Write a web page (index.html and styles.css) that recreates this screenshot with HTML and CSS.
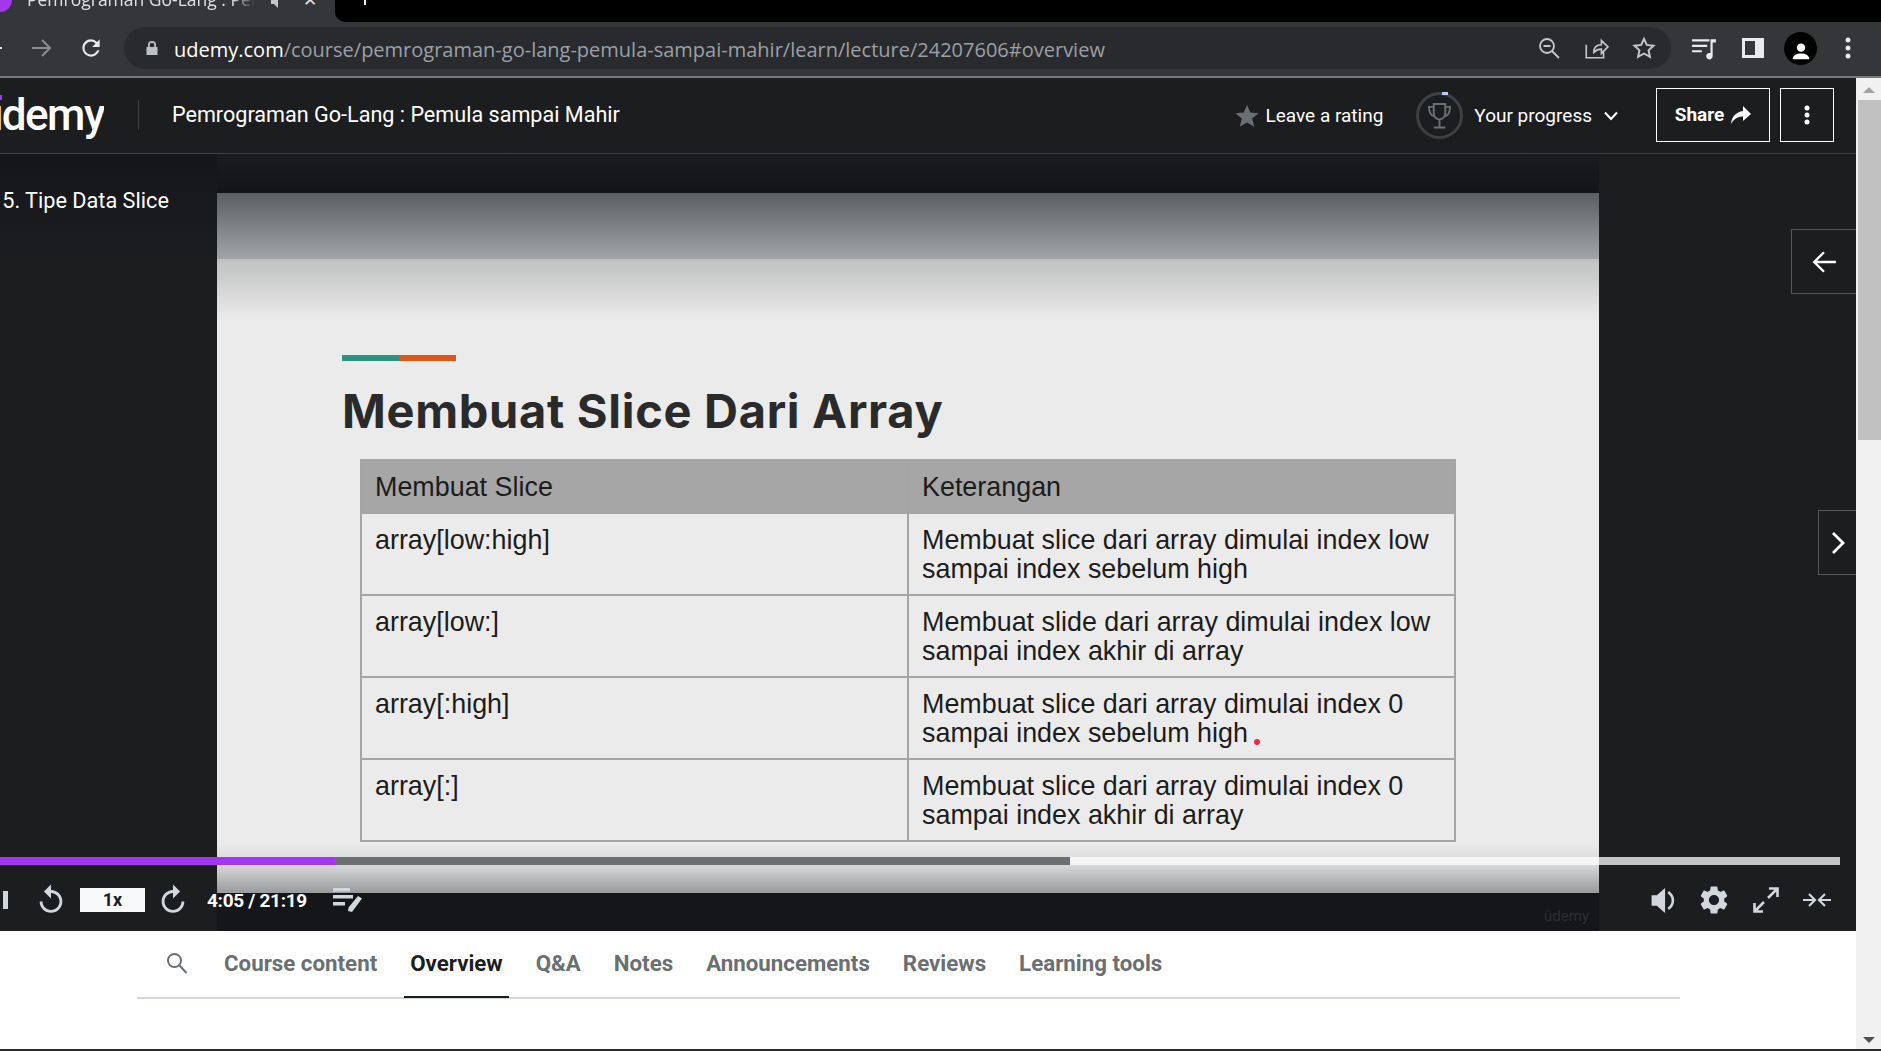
FILE: index.html
```html
<!DOCTYPE html>
<html lang="en">
<head>
    <meta charset="UTF-8">
    <meta name="viewport" content="width=device-width, initial-scale=1.0">
    <title>Pemrograman Go-Lang : Pemula sampai Mahir | Udemy</title>
    <link rel="stylesheet" href="styles.css">
</head>
<body>
    <div class="tabstrip">
        <div class="tab">
            <span class="favicon"></span>
            <span class="tab-title">Pemrograman Go-Lang : Pen</span>
            <svg class="tab-audio" width="14" height="14" viewBox="0 0 14 14"><path d="M1 5h3l4-4v12l-4-4H1z" fill="#c4c7c5"/></svg>
            <span class="tab-close">✕</span>
        </div>
        <div class="tab-rest"><span class="new-tab"></span></div>
    </div>

    <div class="toolbar">
        <svg class="nav-back" width="24" height="24" viewBox="0 0 24 24"><path d="M20 12H2" stroke="#e8eaed" stroke-width="2" fill="none"/></svg>
        <svg class="nav-forward" width="24" height="24" viewBox="0 0 24 24"><path d="M3 12h18M13 4l8 8-8 8" stroke="#8c8e91" stroke-width="2" fill="none"/></svg>
        <svg class="nav-reload" width="26" height="26" viewBox="0 0 24 24"><path d="M17.65 6.35A7.96 7.96 0 0 0 12 4a8 8 0 1 0 7.73 10h-2.08A6 6 0 1 1 12 6c1.66 0 3.14.69 4.22 1.78L13 11h7V4l-2.35 2.35z" fill="#e8eaed"/></svg>
        <div class="omnibox">
            <svg class="lock" width="14" height="16" viewBox="0 0 14 16"><path d="M3 7V5a4 4 0 0 1 8 0v2h1.500v8h-11V7zM4.800 7h4.400V5a2.200 2.200 0 0 0-4.400 0z" fill="#bdc1c6"/></svg>
            <span class="url"><span class="url-host">udemy.com</span>/course/pemrograman-go-lang-pemula-sampai-mahir/learn/lecture/24207606#overview</span>
            <div class="omni-icons">
                <svg width="24" height="24" viewBox="0 0 24 24" fill="none" stroke="#c4c7c5" stroke-width="1.800"><circle cx="10" cy="10" r="7"/><path d="M15 15l7 7M6.500 10h7"/></svg>
                <svg width="26" height="26" viewBox="0 0 24 24" fill="none" stroke="#c4c7c5" stroke-width="1.500"><path d="M3 9v12h16v-5M10 16c0-5 3-7 7-7V5l6 6-6 6v-4c-3 0-5 1-7 3z"/></svg>
                <svg width="26" height="26" viewBox="0 0 24 24" fill="none" stroke="#c4c7c5" stroke-width="1.800"><path d="M12 3.500l2.600 5.700 6.200.700-4.600 4.200 1.300 6.100L12 17.100l-5.500 3.100 1.300-6.100-4.600-4.200 6.200-.700z"/></svg>
            </div>
        </div>
        <div class="toolbar-icons">
            <svg width="26" height="26" viewBox="0 0 24 24" fill="#e8eaed"><path d="M1 4h16v2H1zM1 9h14v2H1zM1 14h9v2H1zM18 4h5v3h-3v12.500a3 3 0 1 1-2-2.800z"/></svg>
            <svg width="24" height="24" viewBox="0 0 24 24"><path d="M1 2h22v20H1zM4 5v14h10V5z" fill="#e8eaed" fill-rule="evenodd"/></svg>
            <span class="avatar">
                <svg width="24" height="24" viewBox="0 0 24 24" fill="#fff"><circle cx="12" cy="8" r="5"/><path d="M2 22c0-5 5-7 10-7s10 2 10 7z"/></svg>
            </span>
            <svg width="6" height="22" viewBox="0 0 6 22" fill="#e8eaed"><circle cx="3" cy="3" r="2.500"/><circle cx="3" cy="11" r="2.500"/><circle cx="3" cy="19" r="2.500"/></svg>
        </div>
    </div>

    <div class="page">
        <div class="content">
            <div class="header">
                <div class="logo">udemy</div>
                <div class="header-sep"></div>
                <div class="course-title">Pemrograman Go-Lang : Pemula sampai Mahir</div>
                <div class="header-right">
                    <div class="rating">
                        <svg width="26" height="26" viewBox="0 0 24 24" fill="#6a6f73"><path d="M12 1.500l3 7.300 7.700.600-5.900 5 1.900 7.600L12 18l-6.700 4 1.900-7.600-5.900-5 7.700-.6z"/></svg>
                        <span>Leave a rating</span>
                    </div>
                    <div class="progress-link">
                        <span class="trophy">
                            <svg width="23" height="27" viewBox="0 0 24 28" fill="none" stroke="#6a6f73" stroke-width="2"><path d="M6 2h12v10a6 6 0 0 1-12 0zM6 5H1c0 6 1.500 9 6 10M18 5h5c0 6-1.500 9-6 10M12 18v8M6 26.500h12"/></svg>
                        </span>
                        <span>Your progress</span>
                        <svg class="chevron" width="16" height="12" viewBox="0 0 16 12" fill="none" stroke="#fff" stroke-width="2"><path d="M2 2.500l6 6.500 6-6.500"/></svg>
                    </div>
                    <div class="btn btn-share">
                        <span>Share</span>
                        <svg width="20" height="18" viewBox="0 0 20 18"><path d="M12 0l8 8-8 7v-4.500C7 10.500 3 12.500 0 18c.5-7 5-12 12-13z" fill="#fff"/></svg>
                    </div>
                    <div class="btn btn-more">
                        <svg width="6" height="20" viewBox="0 0 6 20" fill="#fff"><circle cx="3" cy="3" r="2.500"/><circle cx="3" cy="10" r="2.500"/><circle cx="3" cy="17" r="2.500"/></svg>
                    </div>
                </div>
            </div>

            <div class="video">
                <div class="video-left">
                    <p class="lecture-name">15. Tipe Data Slice</p>
                </div>
                <div class="stage">
                    <div class="slide">
                        <div class="accent"><span class="accent-teal"></span><span class="accent-orange"></span></div>
                        <h1 class="slide-title">Membuat Slice Dari Array</h1>
                        <table class="slide-table">
                            <thead>
                                <tr><th>Membuat Slice</th><th>Keterangan</th></tr>
                            </thead>
                            <tbody>
                                <tr><td>array[low:high]</td><td>Membuat slice dari array dimulai index low<br>sampai index sebelum high</td></tr>
                                <tr><td>array[low:]</td><td>Membuat slide dari array dimulai index low<br>sampai index akhir di array</td></tr>
                                <tr><td>array[:high]</td><td>Membuat slice dari array dimulai index 0<br>sampai index sebelum high<span class="red-dot"></span></td></tr>
                                <tr><td>array[:]</td><td>Membuat slice dari array dimulai index 0<br>sampai index akhir di array</td></tr>
                            </tbody>
                        </table>
                    </div>
                    <div class="stage-bottom"><span class="watermark">ûdemy</span></div>
                </div>
                <div class="video-right"></div>

                <div class="nav-btn nav-prev">
                    <svg width="26" height="26" viewBox="0 0 24 24" fill="none" stroke="#fff" stroke-width="2.200"><path d="M23 12H3M12 3l-9 9 9 9"/></svg>
                </div>
                <div class="nav-btn nav-next">
                    <svg width="16" height="24" viewBox="0 0 16 24" fill="none" stroke="#fff" stroke-width="2.800"><path d="M3 2l10 10L3 22"/></svg>
                </div>

                <div class="seekbar">
                    <div class="seek-played"></div>
                    <div class="seek-buffered"></div>
                </div>

                <div class="controls">
                    <span class="pause-bar"></span>
                    <svg class="ctl-rewind" width="34" height="34" viewBox="0 0 24 24" fill="#d1d7dc"><path d="M12 5V1L7 6l5 5V7c3.310 0 6 2.690 6 6s-2.690 6-6 6-6-2.690-6-6H4c0 4.420 3.580 8 8 8s8-3.580 8-8-3.580-8-8-8z"/></svg>
                    <span class="speed">1x</span>
                    <svg class="ctl-forward" width="34" height="34" viewBox="0 0 24 24" fill="#d1d7dc"><path d="M12 5V1l5 5-5 5V7c-3.310 0-6 2.690-6 6s2.690 6 6 6 6-2.690 6-6h2c0 4.420-3.580 8-8 8s-8-3.580-8-8 3.580-8 8-8z"/></svg>
                    <span class="time">4:05 / 21:19</span>
                    <svg class="ctl-notes" width="30" height="24" viewBox="0 0 30 24" fill="#d1d7dc"><path d="M0 0h17v3.500H0zM0 7h20v3.500H0zM0 14h12v3.500H0zM25 8l4 2.500L19 24l-4-1 .5-3.500z"/></svg>
                    <div class="controls-right">
                        <svg width="24" height="27" viewBox="0 0 22 26" fill="#d1d7dc"><path d="M0 8h5l8-7v24l-8-7H0z"/><path d="M16 5c6 4 6 12 0 16" fill="none" stroke="#d1d7dc" stroke-width="2.500"/></svg>
                        <svg width="34" height="34" viewBox="0 0 24 24" fill="#d1d7dc"><path d="M19.140 12.940c.04-.3.06-.61.06-.94 0-.32-.02-.64-.07-.94l2.030-1.580c.18-.14.23-.41.12-.61l-1.920-3.320c-.12-.22-.37-.29-.59-.22l-2.390.96c-.5-.38-1.030-.7-1.620-.94l-.36-2.540c-.04-.24-.24-.41-.48-.41h-3.840c-.24 0-.43.17-.47.41l-.36 2.540c-.59.24-1.130.57-1.620.94l-2.390-.96c-.22-.08-.47 0-.59.22L2.740 8.870c-.12.21-.08.47.12.61l2.030 1.580c-.05.3-.09.63-.09.94s.02.64.07.94l-2.030 1.580c-.18.14-.23.41-.12.61l1.920 3.320c.12.22.37.29.59.22l2.390-.96c.5.38 1.030.7 1.620.94l.36 2.540c.05.24.24.41.48.41h3.840c.24 0 .44-.17.47-.41l.36-2.540c.59-.24 1.130-.56 1.620-.94l2.390.96c.22.08.47 0 .59-.22l1.920-3.320c.12-.22.07-.47-.12-.61l-2.010-1.580zM12 15.600c-1.980 0-3.600-1.620-3.600-3.600s1.620-3.600 3.600-3.600 3.600 1.620 3.600 3.600-1.620 3.600-3.600 3.600z"/></svg>
                        <svg width="26" height="26" viewBox="0 0 26 26" fill="none" stroke="#d1d7dc" stroke-width="2.600"><path d="M15 11l9-9M16 1.500h8.500V10M11 15l-9 9M1.500 16v8.500H10"/></svg>
                        <svg class="ctl-compress" width="28" height="16" viewBox="0 0 28 16" fill="none" stroke="#d1d7dc" stroke-width="2.200"><path d="M0 8h12M6 2l6 6-6 6M28 8H16M22 2l-6 6 6 6"/></svg>
                    </div>
                </div>
            </div>

            <div class="tabs-area">
                <div class="tabs">
                    <svg class="tabs-search" width="24" height="24" viewBox="0 0 24 24" fill="none" stroke="#6a6f73" stroke-width="2"><circle cx="9.500" cy="9.500" r="6.500"/><path d="M14.500 14.500l7 7.500"/></svg>
                    <div class="tab-link">Course content</div>
                    <div class="tab-link tab-active">Overview</div>
                    <div class="tab-link">Q&amp;A</div>
                    <div class="tab-link">Notes</div>
                    <div class="tab-link">Announcements</div>
                    <div class="tab-link">Reviews</div>
                    <div class="tab-link">Learning tools</div>
                </div>
            </div>
        </div>

        <div class="scrollbar">
            <span class="arrow-up"></span>
            <div class="thumb"></div>
            <span class="arrow-down"></span>
        </div>
    </div>
    <div class="taskbar-edge"></div>
</body>
</html>
```

FILE: styles.css
```css
* {
    box-sizing: border-box;
}
html, body {
    height: 100%;
}
body {
    margin: 0;
    width: 1881px;
    height: 1051px;
    overflow: hidden;
    display: flex;
    flex-direction: column;
    font-family: Roboto, 'Liberation Sans', sans-serif;
    background-color: #fff;
}

/* browser tab row, cut off by the top of the screen */
.tabstrip {
    display: flex;
    height: 22px;
    flex-shrink: 0;
    background-color: #35363a;
}
.tab {
    width: 335px;
    height: 22px;
    overflow: hidden;
    display: flex;
    align-items: center;
    color: #dee1e6;
    font-family: 'Open Sans', sans-serif;
    font-size: 17.500px;
    white-space: nowrap;
}
.favicon {
    width: 24px;
    height: 24px;
    margin-left: -12px;
    margin-top: -22px;
    border-radius: 50%;
    background-color: #a435f0;
    flex-shrink: 0;
}
.tab-title {
    width: 228px;
    margin-left: 15px;
    margin-top: -24px;
    overflow: hidden;
    -webkit-mask-image: linear-gradient(to right, #000 90%, transparent);
    mask-image: linear-gradient(to right, #000 90%, transparent);
}
.tab-audio {
    margin-left: 15px;
    margin-top: -18px;
}
.tab-close {
    margin-left: 19px;
    margin-top: -24px;
    font-size: 17px;
}
.tab-rest {
    flex: 1;
    background-color: #000;
    border-bottom-left-radius: 10px;
    padding-left: 29px;
}
.new-tab {
    display: block;
    width: 2px;
    height: 5px;
    background-color: #e8eaed;
}

/* browser toolbar */
.toolbar {
    display: flex;
    align-items: center;
    height: 56px;
    flex-shrink: 0;
    padding-bottom: 2px;
    background-color: #35363a;
    border-bottom: 2px solid #77787a;
}
.nav-back {
    margin-left: -18px;
    flex-shrink: 0;
}
.nav-forward {
    margin-left: 23px;
}
.nav-reload {
    margin-left: 25px;
}
.omnibox {
    display: flex;
    align-items: center;
    width: 1547px;
    height: 42px;
    margin-left: 20px;
    padding: 0 14px 0 21px;
    border-radius: 21px;
    background-color: #292a2d;
}
.lock {
    flex-shrink: 0;
}
.url {
    margin-left: 15px;
    padding-top: 2px;
    font-family: 'Open Sans', sans-serif;
    font-size: 20px;
    color: #9aa0a6;
    white-space: nowrap;
}
.url-host {
    color: #fff;
}
.omni-icons {
    margin-left: auto;
    display: flex;
    align-items: center;
    gap: 22px;
}
.toolbar-icons {
    display: flex;
    align-items: center;
    margin-left: 20px;
    gap: 24px;
}
.avatar {
    display: flex;
    align-items: flex-end;
    justify-content: center;
    width: 33px;
    height: 33px;
    margin: 0 4px 0 -5px;
    padding-bottom: 4px;
    border-radius: 50%;
    background-color: #000;
}
.avatar svg {
    width: 20px;
    height: 20px;
}

/* page below the browser */
.page {
    flex: 1;
    min-height: 0;
    display: flex;
}
.content {
    width: 1856px;
    display: flex;
    flex-direction: column;
}
.scrollbar {
    flex: 1;
    display: flex;
    flex-direction: column;
    align-items: flex-end;
    background-color: #f1f1f1;
}
.arrow-up {
    width: 0;
    height: 0;
    margin: 9px 6px 7px 0;
    border-left: 6px solid transparent;
    border-right: 6px solid transparent;
    border-bottom: 6px solid #a3a3a3;
}
.thumb {
    width: 23px;
    height: 340px;
    background-color: #c1c1c1;
}
.arrow-down {
    width: 0;
    height: 0;
    margin: auto 6px 6px 0;
    border-left: 6px solid transparent;
    border-right: 6px solid transparent;
    border-top: 6px solid #505050;
}
.taskbar-edge {
    height: 2px;
    flex-shrink: 0;
    background-color: #2b2b2b;
}

/* udemy header */
.header {
    display: flex;
    align-items: center;
    height: 76px;
    padding-bottom: 2px;
    flex-shrink: 0;
    color: #fff;
    background-color: #1c1d1f;
    border-bottom: 1px solid #3e4143;
}
.logo {
    position: relative;
    width: 104px;
    direction: rtl;
    overflow: hidden;
    font-size: 44px;
    font-weight: 500;
    letter-spacing: -1.500px;
    line-height: 60px;
    white-space: nowrap;
}
.logo::before {
    content: "";
    position: absolute;
    left: 0;
    top: 10px;
    width: 2px;
    height: 5px;
    background-color: #a435f0;
}
.header-sep {
    width: 1px;
    height: 30px;
    margin-left: 34px;
    background-color: #3e4143;
}
.course-title {
    margin-left: 33px;
    font-size: 21.600px;
    white-space: nowrap;
}
.header-right {
    margin-left: auto;
    display: flex;
    align-items: center;
    padding-right: 22px;
    font-size: 19px;
}
.rating {
    display: flex;
    align-items: center;
    gap: 6px;
    margin-top: 2px;
}
.progress-link {
    display: flex;
    align-items: center;
    margin-left: 33px;
    margin-top: 2px;
}
.trophy {
    position: relative;
    display: flex;
    align-items: center;
    justify-content: center;
    width: 47px;
    height: 47px;
    margin-right: 11px;
    border: 3px solid #3e4143;
    border-radius: 50%;
}
/* little progress mark at the top of the ring */
.trophy::before {
    content: "";
    position: absolute;
    top: -3px;
    left: 23px;
    width: 6px;
    height: 3px;
    background-color: #c0c4fc;
}
.chevron {
    margin-left: 11px;
}
.btn {
    display: flex;
    align-items: center;
    justify-content: center;
    height: 54px;
    border: 1px solid #fff;
}
.btn-share {
    width: 114px;
    margin-left: 37px;
    gap: 7px;
    font-weight: 700;
}
.btn-more {
    width: 54px;
    margin-left: 10px;
}

/* video player */
.video {
    position: relative;
    display: flex;
    height: 777px;
    flex-shrink: 0;
    overflow: hidden;
    background-color: #1c1d1f;
}
.video-left {
    width: 217px;
    flex-shrink: 0;
    background: linear-gradient(#15161a, #1c1d1f 110px);
}
.lecture-name {
    margin: 34px 0 0 -10px;
    color: #fff;
    font-size: 21.700px;
    white-space: nowrap;
}
.video-right {
    flex: 1;
}
.stage {
    width: 1382px;
    padding-top: 39px;
    display: flex;
    flex-direction: column;
    background: linear-gradient(#1b1c1f, #131418 39px);
}
.slide {
    height: 700px;
    padding: 162px 0 0 125px;
    color: #1c1c1c;
    background: linear-gradient(#5b5e62, #a2a5a7 66px, #bfc0c1 66px, #ebebeb 127px, #ebebeb 650px, #d8d8da 672px, #989a9c 700px);
}
.accent {
    display: flex;
    width: 114px;
    height: 6px;
}
.accent-teal {
    flex: 1;
    background-color: #2a9480;
}
.accent-orange {
    flex: 1;
    background-color: #d9581a;
}
.slide-title {
    margin: 20px 0 18px;
    font-family: Inter, sans-serif;
    font-size: 47px;
    font-weight: 700;
    letter-spacing: 0.700px;
    line-height: 60px;
    color: #2a2a2a;
    white-space: nowrap;
}
.slide-table {
    width: 1096px;
    margin-left: 18px;
    border-collapse: collapse;
    table-layout: fixed;
    font-family: 'Liberation Sans', Arial, sans-serif;
    font-size: 26.900px;
    line-height: 29px;
}
.slide-table th,
.slide-table td {
    border: 2px solid #a5a5a5;
    font-weight: 400;
    text-align: left;
    vertical-align: top;
}
.slide-table th {
    height: 53px;
    padding: 12px 13px 10px;
    background-color: #a6a6a6;
}
.slide-table td {
    height: 82px;
    padding: 12px 13px 8px;
}
.red-dot {
    display: inline-block;
    width: 6px;
    height: 6px;
    margin-left: 6px;
    vertical-align: -3px;
    border-radius: 50%;
    background-color: #e0304a;
}
.stage-bottom {
    flex: 1;
    display: flex;
    justify-content: flex-end;
    align-items: flex-end;
    padding: 0 10px 6px 0;
    background-color: #15161a;
}
.watermark {
    font-size: 15px;
    color: #2e2f32;
}
.nav-btn {
    position: absolute;
    right: 0;
    display: flex;
    align-items: center;
    justify-content: center;
    background-color: #1c1d1f;
    border: 1px solid #55585b;
    border-right: none;
}
.nav-prev {
    top: 75px;
    width: 65px;
    height: 65px;
}
.nav-next {
    top: 356px;
    width: 38px;
    height: 65px;
}
.seekbar {
    position: absolute;
    left: 0;
    top: 703px;
    display: flex;
    width: 1840px;
    height: 8px;
    background-color: rgba(255, 255, 255, 0.74);
}
.seek-played {
    width: 335px;
    background-color: #a435f0;
}
.seek-buffered {
    width: 735px;
    background-color: #6a6f73;
}
.controls {
    position: absolute;
    left: 0;
    right: 0;
    top: 730px;
    height: 32px;
    display: flex;
    align-items: center;
}
.pause-bar {
    width: 5px;
    height: 18px;
    margin-left: 3px;
    background-color: #d1d7dc;
}
.ctl-rewind {
    margin-left: 26px;
}
.speed {
    width: 65px;
    height: 24px;
    margin-left: 12px;
    background-color: #f7f9fa;
    color: #1c1d1f;
    font-size: 18px;
    font-weight: 700;
    line-height: 24px;
    text-align: center;
}
.ctl-forward {
    margin-left: 11px;
}
.time {
    margin-left: 17px;
    color: #fff;
    font-size: 19px;
    font-weight: 700;
    white-space: nowrap;
    letter-spacing: -0.300px;
}
.ctl-notes {
    margin-left: 26px;
}
.controls-right {
    margin-left: auto;
    padding-right: 25px;
    display: flex;
    align-items: center;
    gap: 22px;
}
.ctl-compress {
    margin-left: 2px;
}

/* tab row under the player */
.tabs-area {
    flex: 1;
    padding: 0 176px 0 137px;
    background-color: #fff;
}
.tabs {
    display: flex;
    align-items: center;
    height: 68px;
    padding-left: 28px;
    gap: 21px;
    border-bottom: 2px solid #d1d7dc;
}
.tabs-search {
    margin-right: 8px;
    margin-top: -3px;
}
.tab-link {
    height: 68px;
    padding: 0 6px;
    color: #6a6f73;
    font-size: 22.300px;
    font-weight: 700;
    line-height: 67px;
    white-space: nowrap;
}
.tab-active {
    color: #1c1d1f;
    border-bottom: 2px solid #1c1d1f;
}
```
